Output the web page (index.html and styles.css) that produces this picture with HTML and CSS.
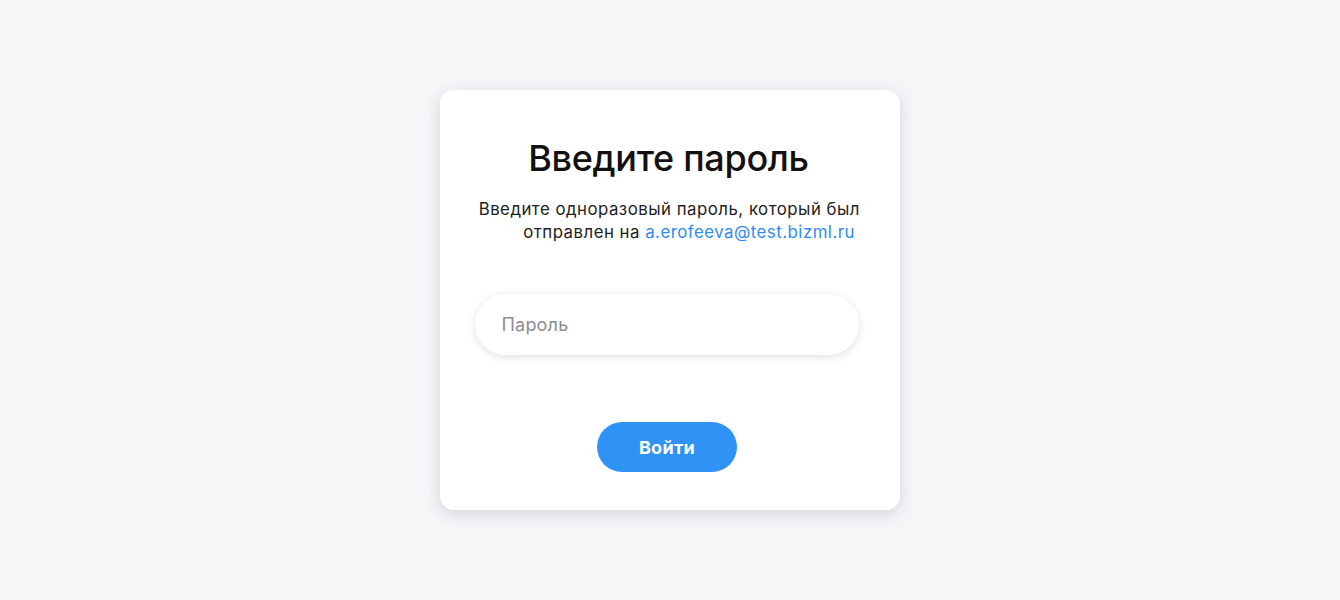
FILE: index.html
```html
<!DOCTYPE html>
<html lang="ru">
<head>
<meta charset="utf-8">
<title>Введите пароль</title>
<link rel="stylesheet" href="styles.css">
</head>
<body>
<main class="page">
  <section class="card">
    <h1 class="title">Введите пароль</h1>
    <p class="desc">Введите одноразовый пароль, который был отправлен на <a class="email" href="#">a.erofeeva@test.bizml.ru</a></p>
    <input class="field" type="password" placeholder="Пароль">
    <button class="btn" type="button">Войти</button>
  </section>
</main>
</body>
</html>
```

FILE: styles.css
```css
* { box-sizing: border-box; }
html, body { margin: 0; padding: 0; }
body {
  background: #f5f6f8;
  font-family: "Inter", "Noto Sans", sans-serif;
  color: #1f2226;
}
.page {
  height: 600px;
  display: flex;
  justify-content: center;
  align-items: flex-start;
  padding-top: 90px;
}
.card {
  width: 460px;
  height: 420px;
  background: #fff;
  border-radius: 14px;
  box-shadow: 0 4px 16px rgba(30, 40, 60, 0.16);
  padding: 44px 40px 0 35px;
  display: flex;
  flex-direction: column;
  align-items: center;
}
.title {
  margin: 0;
  font-family: "Inter", "Noto Sans", sans-serif;
  font-weight: 500;
  font-size: 36px;
  line-height: 48px;
  color: #111;
  letter-spacing: -0.3px;
  padding-left: 2px;
}
.desc {
  margin: 16px 0 0;
  width: 100%;
  text-align: right;
  font-size: 16.8px;
  line-height: 23px;
  letter-spacing: 0.5px;
  color: #222;
  padding-right: 0;
}
.email { color: #2f8cf0; text-decoration: none; padding-right: 5px; }
.field {
  margin-top: 50px;
  width: 384px;
  height: 61px;
  border: none;
  border-radius: 31px;
  background: #fff;
  box-shadow: 0 2px 8px rgba(0, 0, 0, 0.13);
  padding: 0 27px;
  font-family: "Inter", "Noto Sans", sans-serif;
  font-size: 18px;
  letter-spacing: 0.2px;
  color: #222;
  outline: none;
  margin-left: -2px;
}
.field::placeholder { color: #8a8e95; }
.btn {
  margin-top: 67px;
  width: 140px;
  height: 50px;
  border: none;
  border-radius: 25px;
  background: #2f93f5;
  color: #fff;
  font-family: "Inter", "Noto Sans", sans-serif;
  font-weight: 700;
  font-size: 18px;
  letter-spacing: 0.3px;
  margin-left: -1px;
}
```
